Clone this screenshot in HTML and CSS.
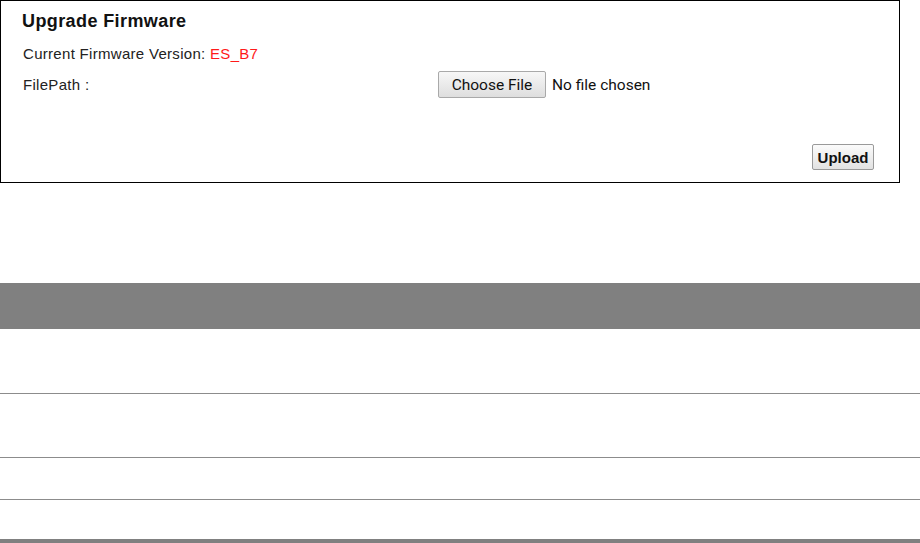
FILE: index.html
```html
<!DOCTYPE html>
<html>
<head>
<meta charset="utf-8">
<link rel="stylesheet" href="styles.css">
</head>
<body>
<div class="panel">
  <h2 class="title">Upgrade Firmware</h2>
  <div class="version">Current Firmware Version: <span class="ver">ES_B7</span></div>
  <div class="filerow">
    <span class="label">FilePath :</span>
    <div class="fileinput"><span class="choose">Choose File</span><span class="nofile">No file chosen</span></div>
  </div>
  <div class="actions"><span class="upload">Upload</span></div>
</div>
<div class="table">
  <div class="thead"></div>
  <div class="row r1"></div>
  <div class="row r2"></div>
  <div class="row r3"></div>
  <div class="row r4"></div>
</div>
</body>
</html>
```
FILE: styles.css
```css
html, body {
  margin: 0;
  padding: 0;
  background: #fff;
}
body {
  font-family: "Liberation Sans", Arial, sans-serif;
  color: #222;
  width: 920px;
  overflow: hidden;
}
.panel {
  width: 898px;
  border: 1px solid #000;
  padding: 10px 0 12px 0;
}
.title {
  margin: 0 0 0 21px;
  font-size: 18px;
  line-height: 20px;
  font-weight: bold;
  letter-spacing: 0.4px;
  color: #111;
}
.version {
  margin: 14px 0 0 22px;
  font-size: 15px;
  line-height: 18px;
  letter-spacing: 0.3px;
}
.ver {
  color: #ff1a1a;
}
.filerow {
  margin: 8px 0 0 22px;
  display: grid;
  grid-template-columns: 415px 1fr;
  align-items: center;
  height: 27px;
  font-size: 15px;
  letter-spacing: 0.3px;
}
.fileinput {
  display: flex;
  align-items: center;
  font-family: Roboto, "Liberation Sans", sans-serif;
  font-size: 15.5px;
  letter-spacing: 0;
  color: #111;
}
.choose {
  box-sizing: border-box;
  width: 108px;
  height: 27px;
  border: 1px solid #a9a9a9;
  border-radius: 2px;
  background: linear-gradient(#f7f7f7, #dedede);
  display: flex;
  align-items: center;
  justify-content: center;
}
.nofile {
  margin-left: 6px;
}
.actions {
  display: flex;
  justify-content: flex-end;
  margin-top: 46px;
  padding-right: 25px;
}
.upload {
  box-sizing: border-box;
  width: 62px;
  height: 26px;
  border: 1px solid #9a9a9a;
  border-radius: 2px;
  background: linear-gradient(#fbfbfb, #e2e2e2);
  display: flex;
  align-items: center;
  justify-content: center;
  font-weight: bold;
  font-size: 15px;
  letter-spacing: 0;
  color: #111;
}
.table {
  margin-top: 100px;
  width: 920px;
}
.thead {
  height: 46px;
  background: #808080;
}
.row {
  border-bottom: 1px solid #8c8c8c;
}
.r1 { height: 64px; }
.r2 { height: 63px; }
.r3 { height: 41px; }
.r4 { height: 39px; border-bottom: 4px solid #808080; }
```
